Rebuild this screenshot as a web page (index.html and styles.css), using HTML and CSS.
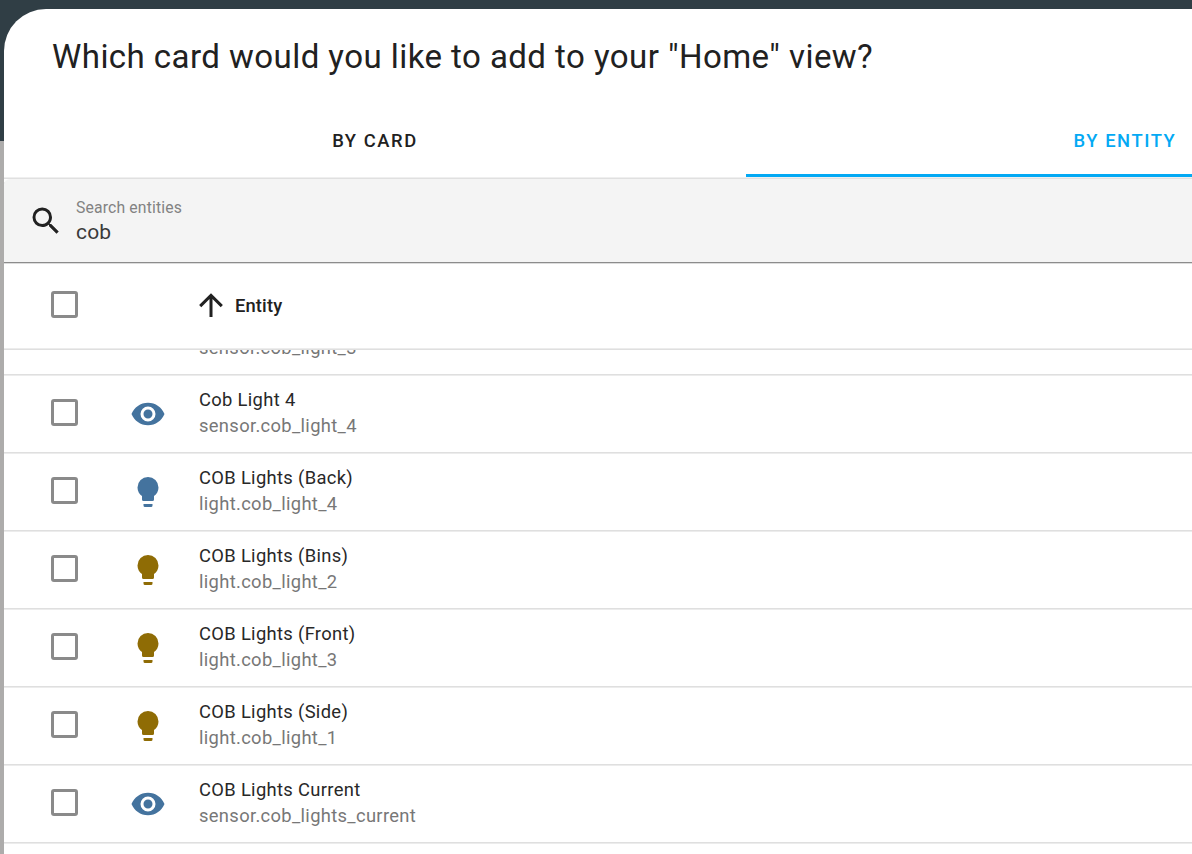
FILE: index.html
```html
<!DOCTYPE html>
<html lang="en">
<head>
<meta charset="utf-8">
<title>Add card</title>
<link rel="stylesheet" href="styles.css">
</head>
<body>
<svg class="sprite" aria-hidden="true">
  <symbol id="eye" viewBox="0 0 24 24"><path d="M12,9A3,3 0 0,0 9,12A3,3 0 0,0 12,15A3,3 0 0,0 15,12A3,3 0 0,0 12,9M12,17A5,5 0 0,1 7,12A5,5 0 0,1 12,7A5,5 0 0,1 17,12A5,5 0 0,1 12,17M12,4.5C7,4.5 2.73,7.61 1,12C2.73,16.39 7,19.5 12,19.5C17,19.5 21.27,16.39 23,12C21.27,7.61 17,4.5 12,4.5Z"/></symbol>
  <symbol id="bulb" viewBox="0 0 24 24"><path d="M12,2A7,7 0 0,0 5,9C5,11.38 6.19,13.47 8,14.74V17A1,1 0 0,0 9,18H15A1,1 0 0,0 16,17V14.74C17.81,13.47 19,11.38 19,9A7,7 0 0,0 12,2M9,21A1,1 0 0,0 10,22H14A1,1 0 0,0 15,21V20H9V21Z"/></symbol>
</svg>
<main class="dialog">
  <h1 class="title">Which card would you like to add to your "Home" view?</h1>
  <nav class="tabs">
    <button class="tab">BY CARD</button>
    <button class="tab active">BY ENTITY</button>
  </nav>
  <label class="search">
    <svg class="icon" viewBox="0 0 24 24"><path d="M9.5,3A6.5,6.5 0 0,1 16,9.5C16,11.11 15.41,12.59 14.44,13.73L14.71,14H15.5L20.5,19L19,20.5L14,15.5V14.71L13.73,14.44C12.59,15.41 11.11,16 9.5,16A6.5,6.5 0 0,1 3,9.5A6.5,6.5 0 0,1 9.5,3M9.5,5C7,5 5,7 5,9.5C5,12 7,14 9.5,14C12,14 14,12 14,9.5C14,7 12,5 9.5,5Z"/></svg>
    <span class="field"><span class="hint">Search entities</span><span class="value">cob</span></span>
  </label>
  <div class="head">
    <span class="check"></span>
    <svg class="icon sort" viewBox="0 0 24 24"><path d="M13,20H11V8L5.5,13.5L4.08,12.08L12,4.16L19.92,12.08L18.5,13.5L13,8V20Z"/></svg>
    <span class="column">Entity</span>
  </div>
  <div class="rows">
    <div class="row partial"><div class="entity"><div class="id">sensor.cob_light_3</div></div></div>
    <div class="row"><span class="check"></span><svg class="icon state"><use href="#eye"/></svg><div class="entity"><div class="name">Cob Light 4</div><div class="id">sensor.cob_light_4</div></div></div>
    <div class="row"><span class="check"></span><svg class="icon state"><use href="#bulb"/></svg><div class="entity"><div class="name">COB Lights (Back)</div><div class="id">light.cob_light_4</div></div></div>
    <div class="row"><span class="check"></span><svg class="icon state on"><use href="#bulb"/></svg><div class="entity"><div class="name">COB Lights (Bins)</div><div class="id">light.cob_light_2</div></div></div>
    <div class="row"><span class="check"></span><svg class="icon state on"><use href="#bulb"/></svg><div class="entity"><div class="name">COB Lights (Front)</div><div class="id">light.cob_light_3</div></div></div>
    <div class="row"><span class="check"></span><svg class="icon state on"><use href="#bulb"/></svg><div class="entity"><div class="name">COB Lights (Side)</div><div class="id">light.cob_light_1</div></div></div>
    <div class="row"><span class="check"></span><svg class="icon state"><use href="#eye"/></svg><div class="entity"><div class="name">COB Lights Current</div><div class="id">sensor.cob_lights_current</div></div></div>
  </div>
</main>
</body>
</html>
```
FILE: styles.css
```css
* { box-sizing: border-box; }
body {
  margin: 0;
  height: 854px;
  overflow: hidden;
  padding: 9px 0 0 4px;
  background: linear-gradient(#303e45 141px, #adacab 141px);
  font-family: Roboto, sans-serif;
  color: #212121;
}
.sprite { display: none; }
.dialog {
  display: flex;
  flex-direction: column;
  height: 845px;
  background: #fff;
  border-top-left-radius: 42px;
  overflow: hidden;
}
.title {
  flex: none;
  margin: 0;
  height: 96px;
  padding: 24px 0 0 48px;
  font-size: 33.05px;
  font-weight: 400;
  line-height: 48px;
  letter-spacing: 0.43px;
  white-space: nowrap;
}
.tabs {
  flex: none;
  display: grid;
  grid-template-columns: 742px 758px;
  height: 74px;
  border-bottom: 1px solid #e0e0e0;
  box-shadow: inset 0 -1px #efefef;
}
.tab {
  height: 72px;
  border: 0;
  border-bottom: 3px solid transparent;
  padding: 2px 0 0;
  background: none;
  color: inherit;
  font: 500 18.375px/54px Roboto, sans-serif;
  letter-spacing: 1.57px;
}
.tab.active { color: #03a9f4; border-color: #03a9f4; }
.search {
  flex: none;
  display: flex;
  align-items: center;
  height: 84px;
  padding-left: 24px;
  background: #f4f4f4;
  border-top-left-radius: 6px;
  box-shadow: inset 0 -1px #8c8c8c;
}
.icon { flex: none; width: 36px; height: 36px; fill: currentColor; }
.field { display: flex; flex-direction: column; margin: -2px 0 0 12px; }
.hint { font-size: 15.75px; line-height: 24px; letter-spacing: 0.15px; color: #828282; }
.value { font-size: 21px; line-height: 24px; letter-spacing: 0.2px; color: #3a3a3a; }
.head {
  flex: none;
  display: flex;
  align-items: center;
  height: 87px;
  padding: 0 0 2px 47px;
  border-top: 1px solid #dcdcdc;
  border-bottom: 1px solid #dfdfdf;
  box-shadow: inset 0 -1px #ececec;
}
.head .check, .sort { margin-top: -2px; }
.check {
  flex: none;
  width: 27px;
  height: 27px;
  border: 3px solid #8a8a8a;
  border-radius: 3px;
}
.sort { margin-left: 115px; }
.column { margin-left: 6px; font-size: 18.375px; font-weight: 500; letter-spacing: 0.13px; }
.rows { flex: 1; min-height: 0; overflow: hidden; }
.row {
  display: flex;
  height: 78px;
  padding: 23px 0 0 47px;
  border-bottom: 1px solid #ececec;
  box-shadow: inset 0 -1px #dfdfdf;
}
.state { margin: -3px 0 0 52px; color: #44739e; }
.state.on { color: #8f6c05; }
.entity { margin: -12px 0 0 33px; font-size: 18.375px; line-height: 26px; letter-spacing: 0.33px; white-space: nowrap; }
.name { color: #282828; }
.id { color: #777; }
.row.partial { height: 26px; padding: 0 0 0 195px; }
.partial .entity { margin: -15px 0 0; }
```
